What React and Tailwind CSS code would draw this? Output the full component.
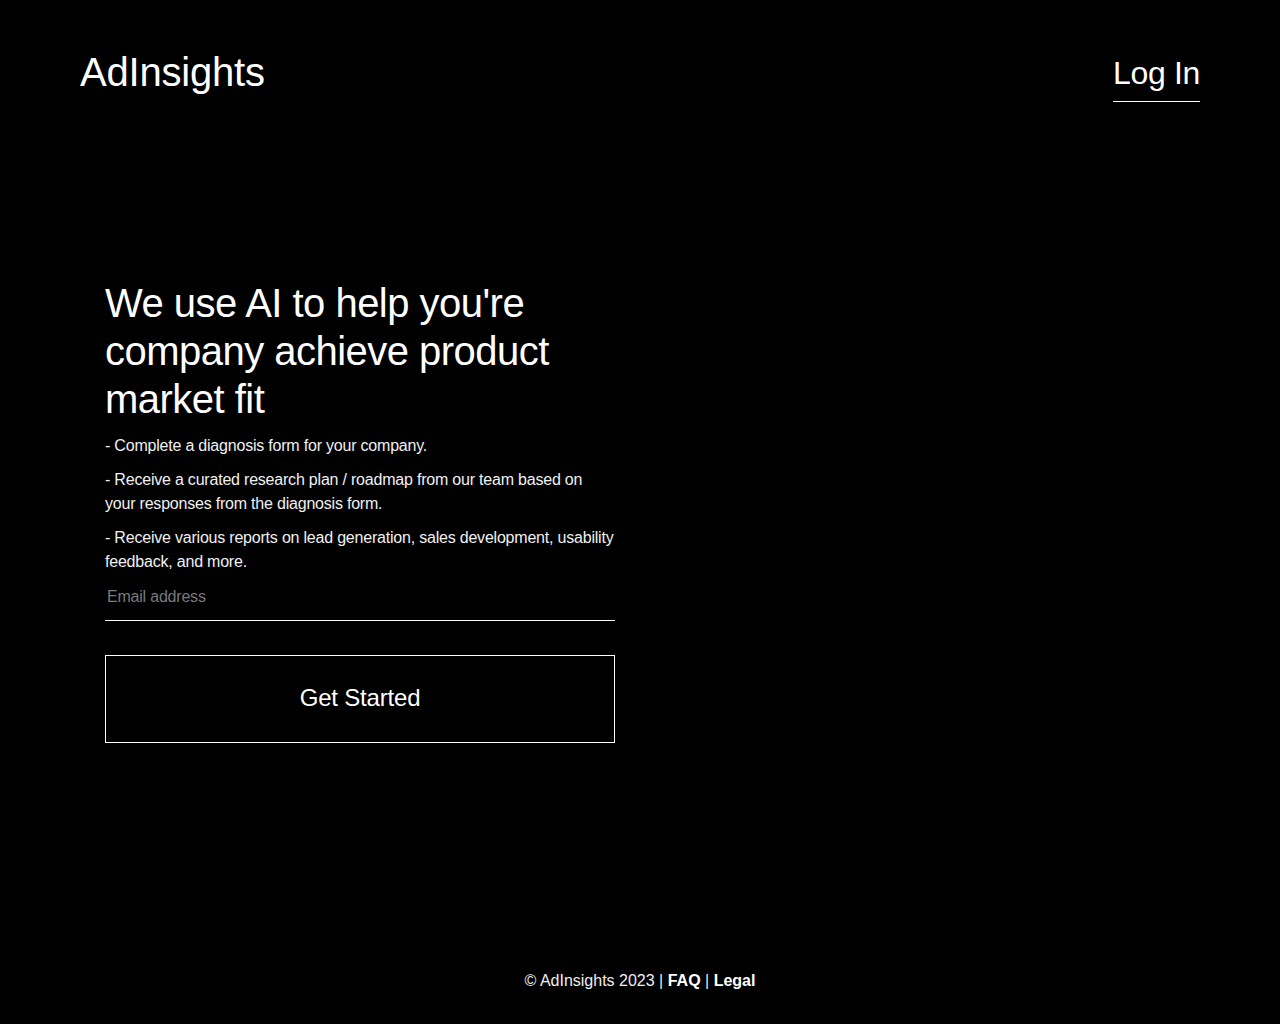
import { useState } from 'react';

const POINTS = [
  '- Complete a diagnosis form for your company.',
  '- Receive a curated research plan / roadmap from our team based on your responses from the diagnosis form.',
  '- Receive various reports on lead generation, sales development, usability feedback, and more.',
];

export default function App() {
  const [email, setEmail] = useState('');

  return (
    <div className="min-h-screen bg-black text-white flex flex-col font-['Liberation_Sans',Arial,sans-serif]">
      <header className="flex items-start justify-between px-20 pt-12">
        <a href="#" className="text-[40px] leading-[48px] tracking-[-0.005em]">AdInsights</a>
        <a href="#" className="mt-[5px] text-[32px] leading-[40px] tracking-[-0.01em] pb-2 border-b border-white">Log In</a>
      </header>

      <main className="flex-1 pl-[105px] pt-[177px]">
        <div className="w-[510px]">
          <h1 className="text-[40px] leading-[48px] font-normal tracking-[-0.013em]">
            We use AI to help you're company achieve product market fit
          </h1>
          <div className="mt-[11px] space-y-[10px]">
            {POINTS.map((p) => (
              <p key={p} className="text-base leading-6 tracking-[-0.013em] text-[#f0f0f0]">{p}</p>
            ))}
          </div>
          <input
            type="email"
            value={email}
            onChange={(e) => setEmail(e.target.value)}
            placeholder="Email address"
            className="mt-[10px] w-full bg-transparent pl-0.5 pt-px pb-[11px] text-base leading-6 tracking-[-0.013em] border-b border-white outline-none placeholder:text-[#7a7a7a]"
          />
          <button className="mt-[34px] w-full h-[88px] pb-0.5 border border-white text-2xl tracking-[-0.008em]">
            Get Started
          </button>
        </div>
      </main>

      <footer className="pb-[31px] text-center text-base leading-6 text-[#eeeeee]">
        © AdInsights 2023 | <a href="#" className="font-bold text-white">FAQ</a> | <a href="#" className="font-bold text-white">Legal</a>
      </footer>
    </div>
  );
}
